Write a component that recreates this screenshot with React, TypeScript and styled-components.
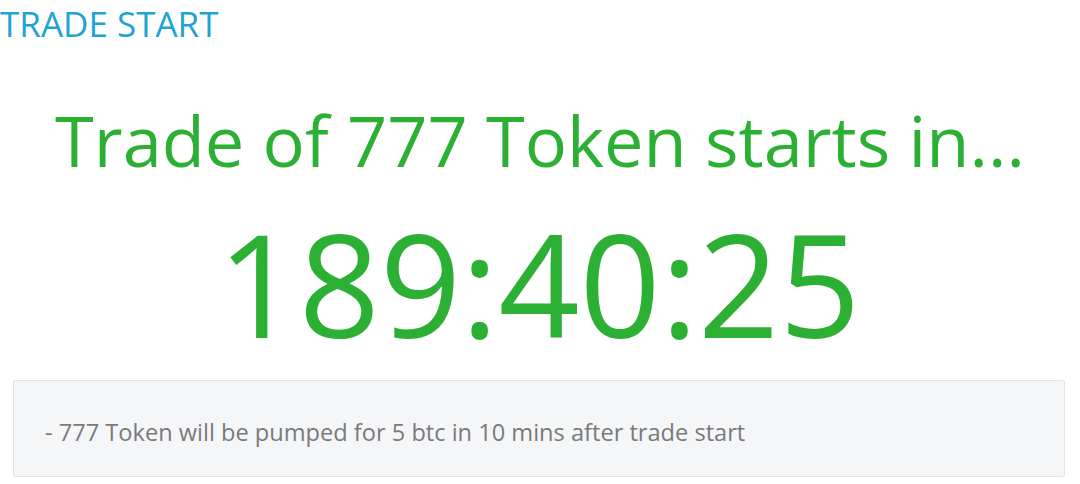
import React from "react";
import styled, { createGlobalStyle } from "styled-components";

const GlobalStyle = createGlobalStyle`
  html, body {
    margin: 0;
    padding: 0;
    background: #ffffff;
    font-family: "Open Sans", "Noto Sans", sans-serif;
  }
`;

const Page = styled.div`
  width: 1080px;
  height: 484px;
  overflow: hidden;
  display: flex;
  flex-direction: column;
`;

const Title = styled.h2`
  margin: 0;
  padding: 2px 0 0 0;
  font-size: 35px;
  font-weight: 400;
  line-height: 44px;
  color: #1fa3d3;
`;

const Headline = styled.h1`
  margin: 52px 0 0 0;
  text-align: center;
  font-size: 70.4px;
  font-weight: 400;
  line-height: 84px;
  color: #2bb034;
`;

const Countdown = styled.div`
  margin-top: 26px;
  padding-right: 2px;
  text-align: center;
  font-size: 142px;
  font-weight: 400;
  line-height: 150px;
  color: #2bb034;
`;

const Note = styled.div`
  margin: 22px 15px 0 13px;
  height: 97px;
  box-sizing: border-box;
  background: #f5f6f8;
  border: 1px solid #e2e4e7;
  border-radius: 2px;
  display: flex;
  align-items: center;
  padding: 6px 0 0 31px;
  font-size: 23.6px;
  color: #7a7a7a;
`;

export default function App() {
  const token = "777 Token";
  return (
    <>
      <GlobalStyle />
      <Page>
        <Title>TRADE START</Title>
        <Headline>Trade of {token} starts in...</Headline>
        <Countdown>189:40:25</Countdown>
        <Note>- {token} will be pumped for 5 btc in 10 mins after trade start</Note>
      </Page>
    </>
  );
}
